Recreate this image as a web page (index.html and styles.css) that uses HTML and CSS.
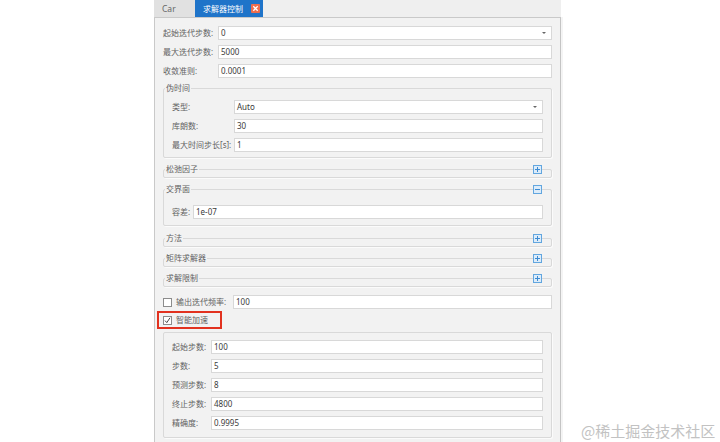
FILE: index.html
```html
<!DOCTYPE html>
<html lang="zh">
<head>
<meta charset="utf-8">
<title>求解器控制</title>
<link rel="stylesheet" href="styles.css">
</head>
<body>
<div class="page">
  <div class="panel">
    <div class="tabs">
      <div class="tab">Car</div>
      <div class="tab active">
        <span>求解器控制</span>
        <svg class="close" width="9" height="9" viewBox="0 0 9 9"><rect x="0" y="0" width="9" height="9" rx="1" fill="#ef6d4c"/><path d="M2.3 2.3 L6.7 6.7 M6.7 2.3 L2.3 6.7" stroke="#fff" stroke-width="1.3"/></svg>
      </div>
    </div>
    <div class="body">
      <div class="rows top">
        <div class="row lw55"><span class="lbl">起始迭代步数:</span><div class="field combo"><span>0</span><i class="caret"></i></div></div>
        <div class="row lw55"><span class="lbl">最大迭代步数:</span><div class="field">5000</div></div>
        <div class="row lw55"><span class="lbl">收敛准则:</span><div class="field">0.0001</div></div>
      </div>

      <div class="grp g-pseudo">
        <div class="gh"><span class="gt">伪时间</span></div>
        <div class="gbody rows pt7 pb5">
          <div class="row lw62"><span class="lbl">类型:</span><div class="field combo"><span>Auto</span><i class="caret"></i></div></div>
          <div class="row lw62"><span class="lbl">库朗数:</span><div class="field">30</div></div>
          <div class="row lw62"><span class="lbl">最大时间步长[s]:</span><div class="field">1</div></div>
        </div>
      </div>

      <div class="grp collapsed m11">
        <div class="gh"><span class="gt">松弛因子</span>
          <svg class="tog" width="9" height="9" viewBox="0 0 9 9"><rect x="0.5" y="0.5" width="8" height="8" fill="#dcecfa" stroke="#62a6df"/><path d="M4.5 2 V7 M2 4.5 H7" stroke="#3d8bd2" stroke-width="1"/></svg>
        </div>
      </div>

      <div class="grp m11">
        <div class="gh"><span class="gt">交界面</span>
          <svg class="tog" width="9" height="9" viewBox="0 0 9 9"><rect x="0.5" y="0.5" width="8" height="8" fill="#dcecfa" stroke="#62a6df"/><path d="M2 4.5 H7" stroke="#3d8bd2" stroke-width="1"/></svg>
        </div>
        <div class="gbody rows pt11 pb6">
          <div class="row lw21"><span class="lbl">容差:</span><div class="field">1e-07</div></div>
        </div>
      </div>

      <div class="grp collapsed m12">
        <div class="gh"><span class="gt">方法</span>
          <svg class="tog" width="9" height="9" viewBox="0 0 9 9"><rect x="0.5" y="0.5" width="8" height="8" fill="#dcecfa" stroke="#62a6df"/><path d="M4.5 2 V7 M2 4.5 H7" stroke="#3d8bd2" stroke-width="1"/></svg>
        </div>
      </div>

      <div class="grp collapsed m11">
        <div class="gh"><span class="gt">矩阵求解器</span>
          <svg class="tog" width="9" height="9" viewBox="0 0 9 9"><rect x="0.5" y="0.5" width="8" height="8" fill="#dcecfa" stroke="#62a6df"/><path d="M4.5 2 V7 M2 4.5 H7" stroke="#3d8bd2" stroke-width="1"/></svg>
        </div>
      </div>

      <div class="grp collapsed m11">
        <div class="gh"><span class="gt">求解限制</span>
          <svg class="tog" width="9" height="9" viewBox="0 0 9 9"><rect x="0.5" y="0.5" width="8" height="8" fill="#dcecfa" stroke="#62a6df"/><path d="M4.5 2 V7 M2 4.5 H7" stroke="#3d8bd2" stroke-width="1"/></svg>
        </div>
      </div>

      <div class="row lw70 chkrow">
        <span class="chk"><svg width="9" height="9" viewBox="0 0 9 9"><rect x="0.5" y="0.5" width="8" height="8" fill="#fff" stroke="#8c8c8c"/></svg><span class="lbl">输出迭代频率:</span></span>
        <div class="field">100</div>
      </div>

      <div class="mark">
        <span class="chk"><svg width="9" height="9" viewBox="0 0 9 9"><rect x="0.5" y="0.5" width="8" height="8" fill="#fff" stroke="#8c8c8c"/><path d="M2 4.6 L3.8 6.6 L7 1.8" fill="none" stroke="#333" stroke-width="0.9"/></svg><span class="lbl">智能加速</span></span>
      </div>

      <div class="grp last">
        <div class="gbody rows pt7 pb7">
          <div class="row lw39"><span class="lbl">起始步数:</span><div class="field">100</div></div>
          <div class="row lw39"><span class="lbl">步数:</span><div class="field">5</div></div>
          <div class="row lw39"><span class="lbl">预测步数:</span><div class="field">8</div></div>
          <div class="row lw39"><span class="lbl">终止步数:</span><div class="field">4800</div></div>
          <div class="row lw39"><span class="lbl">精确度:</span><div class="field">0.9995</div></div>
        </div>
      </div>
    </div>
  </div>
</div>
<div class="watermark">@稀土掘金技术社区</div>
</body>
</html>
```

FILE: styles.css
```css
html, body {
  margin: 0;
  padding: 0;
  background: #ffffff;
}
body {
  width: 720px;
  height: 442px;
  overflow: hidden;
  font-family: "Noto Sans", "Noto Sans CJK SC", sans-serif;
  font-size: 8px;
  line-height: 14px;
  color: #555;
}
.page {
  display: flex;
  padding-left: 154px;
  height: 442px;
}
.panel {
  width: 407px;
  display: flex;
  flex-direction: column;
}
.tabs {
  height: 17px;
  display: flex;
  background: #efefef;
  flex: none;
}
.tab {
  width: 41px;
  box-sizing: border-box;
  padding-left: 8px;
  background: #e1e1e1;
  color: #666;
  font-size: 8.5px;
  line-height: 17px;
}
.tab.active {
  width: 68px;
  background: #1f74c9;
  color: #fff;
  display: flex;
  align-items: center;
  justify-content: space-between;
  padding: 0 3px 0 8px;
  font-size: 8px;
}
.close {
  display: block;
  margin-top: -1px;
}
.body {
  flex: 1;
  background: #f2f2f2;
  border: 1px solid #c9c9c9;
  border-bottom: none;
  border-right: 1px solid #c4c4c4;
  padding: 8px 8px 0 8px;
  box-shadow: 2px 0 0 #f4f4f4;
}
.rows {
  display: flex;
  flex-direction: column;
  gap: 5px;
}
.row {
  display: grid;
  height: 14px;
  align-items: center;
}
.lw55 { grid-template-columns: 55px 1fr; }
.lw62 { grid-template-columns: 62px 1fr; }
.lw21 { grid-template-columns: 21px 1fr; }
.lw39 { grid-template-columns: 39px 1fr; }
.lw70 { grid-template-columns: 70px 1fr; }
.lbl {
  color: #626262;
  white-space: nowrap;
}
.field {
  height: 14px;
  box-sizing: border-box;
  border: 1px solid #d8d8d8;
  background: #fff;
  padding-left: 2px;
  line-height: 12px;
  color: #3a3a3a;
  font-size: 8px;
}
.combo {
  display: flex;
  align-items: center;
  justify-content: space-between;
  padding-right: 5px;
}
.caret {
  width: 0;
  height: 0;
  border-left: 2px solid transparent;
  border-right: 2px solid transparent;
  border-top: 2px solid #666;
}
.grp {
  border: 1px solid #d9d9d9;
  border-radius: 2px;
  box-shadow: 1px 1px 0 #fbfbfb;
}
.g-pseudo { margin-top: 10px; }
.m11 { margin-top: 11px; }
.m12 { margin-top: 12px; }
.gh {
  display: flex;
  align-items: center;
  justify-content: space-between;
  height: 10px;
  margin-top: -6px;
  padding: 0 9px 0 1px;
  line-height: 10px;
}
.gt {
  background: #f2f2f2;
  padding: 0 1px;
  color: #626262;
}
.tog {
  display: block;
}
.collapsed {
  padding-bottom: 3px;
}
.gbody {
  padding-left: 8px;
  padding-right: 8px;
}
.pt7 { padding-top: 7px; }
.pt11 { padding-top: 11px; }
.pb5 { padding-bottom: 5px; }
.pb6 { padding-bottom: 6px; }
.pb7 { padding-bottom: 7px; }
.chkrow {
  margin-top: 8px;
}
.chk {
  display: flex;
  align-items: center;
  gap: 4px;
}
.chk svg {
  display: block;
}
.mark {
  margin-top: 2px;
  margin-left: -6px;
  width: 65px;
  height: 18px;
  box-sizing: border-box;
  border: 2px solid #e2321f;
  padding-left: 4px;
  display: flex;
  align-items: center;
}
.last {
  margin-top: 3px;
}
.watermark {
  position: absolute;
  left: 581px;
  top: 421px;
  font-family: "Noto Sans CJK SC", sans-serif;
  font-size: 15px;
  line-height: 20px;
  color: #c2c2c2;
  white-space: nowrap;
}
```
